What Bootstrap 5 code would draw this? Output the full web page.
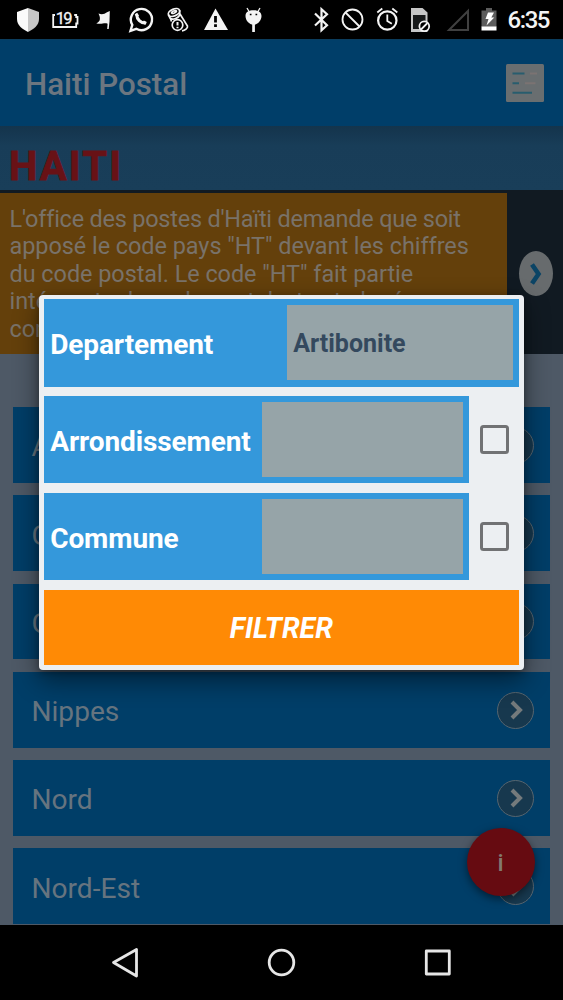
<!DOCTYPE html>
<html lang="fr">
<head>
<meta charset="utf-8">
<meta name="viewport" content="width=device-width, initial-scale=1">
<title>Haiti Postal</title>
<link href="https://cdn.jsdelivr.net/npm/bootstrap@5.3.0/dist/css/bootstrap.min.css" rel="stylesheet">
<style>
body{font-family:Roboto,"Liberation Sans",sans-serif;background:#4e5966;height:1000px;overflow:hidden}
.phone{width:563px;height:1000px}
.statusbar{height:39px;background:#000}
.statusbar svg,.navkeys svg{display:block}
.appbar{height:87px;background:#003e69;padding:0 19px 0 25px;border-top:1px solid #0b3d5e}
.app-title{font-size:31.3px;font-weight:500;color:#6c7680;line-height:1;padding-top:4px}
.country{height:64px;background:linear-gradient(#14344c,#183d58 20px,#193e59);padding:20.5px 0 0 9px}
.country-name{font-size:40px;font-weight:700;line-height:40px;color:#681216;letter-spacing:2.2px;-webkit-text-stroke:.9px #681216}
.notice{height:164px;background:#111a22;padding-top:3px}
.notice-text{width:507px;background:#64400b;color:#797269;font-size:23.45px;line-height:27.4px;padding:13px 10px 0 9.500px;white-space:nowrap;letter-spacing:-.04px}
.tight{letter-spacing:-.21px}
.oval{width:34px;height:45px;border-radius:50%;background:#676b6d;margin:58px 0 0 11.500px}
.list{padding:53px 12.8px 0 12.5px;gap:12.6px;height:571px;overflow:hidden}
.dept{height:75.7px;background:#003e68;color:#66747f;font-size:28.1px;padding:0 16px 0 19px;flex:none}
.dept span{padding-top:5px}
.round{width:37px;height:37px;border-radius:50%;border:1.5px solid #56656f;background:#17384e;margin-top:1px}
.navkeys{height:75px;background:#000;position:relative;border-top:1px solid #000}
.fab{left:466.5px;top:828px;width:68px;height:68px;background:#660b11;color:#83796f;font-size:24px;font-weight:500;box-shadow:0 3px 8px rgba(0,0,0,.5);padding-top:2px}
.dialog{left:39px;top:294.6px;width:484.6px;height:375.2px;padding:4.6px;background:#eceff2;border-radius:4px;box-shadow:0 10px 26px rgba(0,0,0,.48),0 2px 7px rgba(0,0,0,.3);gap:9.4px}
.line{height:87.4px;flex:none}
.blue{background:#3498db;color:#fff;font-weight:700;font-size:28px;padding:6.3px 6.3px 6.3px 6.6px}
.blue span{padding-top:4.6px;letter-spacing:-.11px}
.field{height:75px;background:#96a4a8;color:#34495e;font-size:25px;padding:2.5px 0 0 6.5px}
.f-wide{width:226px}.f-slim{width:201px}
.tick{width:28.5px;height:28.5px;border:3px solid #717274;border-radius:3.5px;margin:0 10.5px 0 11px}
.go{height:75px;background:#ff8a05;color:#fff;font-size:28.5px;font-weight:700;font-style:italic;border:0;border-radius:0;padding:5px 0 0}
</style>
</head>
<body>
<div class="phone position-relative d-flex flex-column overflow-hidden">
  <header class="statusbar">
    <svg width="563" height="39" fill="none" stroke="#f4f4f4" stroke-width="1.8">
      <g stroke="none"><path fill="#fafafa" d="M28 8 17 12v7c0 6 5 10 11 13z"/><path fill="#c7c7c7" d="M28 8l11 4v7c0 6-5 10-11 13z"/></g>
      <path d="M55 15h-1.800V27h23v-3.500h1.300V17h-1.300V15h-2"/>
      <text x="55.800" y="23.600" font-size="16.500" textLength="16.800" fill="#f4f4f4" stroke="#f4f4f4" stroke-width=".3" font-family="Roboto">19</text>
      <path fill="#f4f4f4" stroke="none" d="M98.500 13.500c3.500 1.300 6 .5 8.500-1.300l2.800-1.200-.3 10.500-.8 7.500h-1.500l.4-5.300c-3.500-1.300-5.500 1-11.300-.2 2.200-1.200 3.400-2.300 3.600-4.500.1-2-.4-3.500-1.400-5.500z"/>
      <path stroke-width="2.400" d="M130.500 30.800l1.800-5.900a10.600 10.600 0 1 1 4 3.900z"/>
      <path stroke-width="3" stroke-linecap="round" d="M136.800 15c0 4.500 4 8 8 8"/><path stroke-width="3.400" d="M135.600 15.800l2.500-1.500M143.800 24l1.500-2.800"/>
      <g stroke-width="1.700"><ellipse cx="174" cy="12.500" rx="6" ry="3.400" transform="rotate(-22 174 12.500)"/><ellipse cx="174" cy="12" rx="2.600" ry="1" transform="rotate(-22 174 12)"/><path d="M168.300 14.500l2 4c3 1.500 8-.5 9.500-3.500l-.2-5M180 14l7.500 12c.5 2-2.500 4.500-5.500 4.900M170.300 18l1.200 3.500"/><circle cx="177.500" cy="25" r="5.300"/><path stroke-width="2" d="M177.500 22v3.500m0 1.200v1.600"/></g>
      <path fill="#f4f4f4" stroke="none" d="M215.500 8.500L228 30h-24z"/><path stroke="#000" stroke-width="2.800" d="M215.500 16v6.500m0 1.700V27"/>
      <g fill="#f4f4f4" stroke="none"><path d="M245.500 16c0-4.200 3.500-5.800 8-5.800s8 1.600 8 5.800-3.700 8.800-8 8.800-8-4.600-8-8.800z"/><path d="M252.200 24h2.700v8h-2.700z"/><path stroke="#f4f4f4" stroke-width="1.300" d="M247 8l2.300 4m10.700-4l-2.300 4"/></g><path stroke="#000" stroke-width="1.600" d="M249.800 14.500h1.700m4 0h1.700"/>
      <path stroke-width="2.200" d="M315 13.500l12 11.700-5.500 5V9.300l5.500 5-12 11.200"/>
      <circle cx="352.500" cy="19.500" r="10"/><path d="M345.500 12.500l14 14"/>
      <circle cx="387.300" cy="20.500" r="9.200" stroke-width="2.200"/><path d="M387.300 14.500V21l4.500 2.800M377.300 12.500l5-4M397.300 12.500l-5-4"/>
      <path fill="#c6c6c6" stroke="none" d="M411 8h11.500l5 4.500V32H411z"/><path fill="#17191a" stroke="none" d="M413 15h12.500v14H413z"/><circle cx="424.300" cy="26.300" r="4.900" fill="#000"/><path d="M421 29.500l6.500-6.500"/>
      <path stroke="#404040" stroke-width="2" d="M468 11v19h-19z"/>
      <path fill="#5c5c5c" stroke="none" d="M486 8h6v2.500h4.500V27h-15V10.500h4.500z"/><path fill="#fff" stroke="none" d="M481.500 26.500h15V30.500h-15zM488 12.500h6l-2.700 5h3l-7.800 8 2-6.500h-3z"/>
      <text x="507.500" y="27.800" font-size="24" font-weight="500" textLength="43" fill="#f4f4f4" stroke="none" font-family="Roboto">6:35</text>
    </svg>
  </header>
  <div class="appbar d-flex align-items-center justify-content-between flex-shrink-0">
    <div class="app-title">Haiti Postal</div>
    <svg width="38" height="38" stroke-width="2"><rect width="38" height="38" rx="1.500" fill="#696e70"/><path stroke="#285d6e" d="M6.500 9.500h12m-12 9.700h6.500m-6.500 9.500h19.500"/><path stroke="#7b7372" d="M24 9.500h7m-12 9.700h10.500"/></svg>
  </div>
  <div class="country flex-shrink-0"><div class="country-name">HAITI</div></div>
  <section class="notice d-flex flex-shrink-0">
    <div class="notice-text"><span class="tight">L'office des postes d'Haïti demande que soit</span><br>apposé le code pays "HT" devant les chiffres<br>du code postal. Le code "HT" fait partie<br>intégrante du code postal, et est placé<br>comme suit</div>
    <div class="oval d-flex align-items-center justify-content-center"><svg width="14" height="24" fill="none" stroke="#0b4465" stroke-width="4.600"><path d="M3 2.500l6.500 9.500L3 21.500"/></svg></div>
  </section>
  <main class="list d-flex flex-column flex-shrink-0">
    <div class="dept d-flex align-items-center justify-content-between"><span>Artibonite</span><div class="round"></div></div>
    <div class="dept d-flex align-items-center justify-content-between"><span>Centre</span><div class="round"></div></div>
    <div class="dept d-flex align-items-center justify-content-between"><span>Grand'Anse</span><div class="round"></div></div>
    <div class="dept d-flex align-items-center justify-content-between"><span>Nippes</span><div class="round d-flex align-items-center justify-content-center"><svg width="16" height="20" fill="none" stroke="#747a7c" stroke-width="4"><path d="M4 2l8 8-8 8"/></svg></div></div>
    <div class="dept d-flex align-items-center justify-content-between"><span>Nord</span><div class="round d-flex align-items-center justify-content-center"><svg width="16" height="20" fill="none" stroke="#747a7c" stroke-width="4"><path d="M4 2l8 8-8 8"/></svg></div></div>
    <div class="dept d-flex align-items-center justify-content-between"><span>Nord-Est</span><div class="round d-flex align-items-center justify-content-center"><svg width="16" height="20" fill="none" stroke="#747a7c" stroke-width="4"><path d="M4 2l8 8-8 8"/></svg></div></div>
  </main>
  <div class="fab position-absolute rounded-circle d-flex align-items-center justify-content-center">i</div>
  <nav class="navkeys flex-shrink-0">
    <svg width="563" height="74" fill="none" stroke="#e6e6e6" stroke-width="2.800" stroke-linejoin="round"><path d="M136.500 23.500v26.500l-23-13.500z"/><circle cx="281.500" cy="36.500" r="12.300"/><rect x="426.300" y="25" width="23" height="23"/></svg>
  </nav>
  <form class="dialog position-absolute d-flex flex-column">
    <div class="line blue d-flex align-items-center justify-content-between"><span>Departement</span><div class="field f-wide d-flex align-items-center">Artibonite</div></div>
    <div class="line d-flex align-items-center">
      <div class="line blue flex-grow-1 d-flex align-items-center justify-content-between"><span>Arrondissement</span><div class="field f-slim"></div></div><div class="tick"></div>
    </div>
    <div class="line d-flex align-items-center">
      <div class="line blue flex-grow-1 d-flex align-items-center justify-content-between"><span>Commune</span><div class="field f-slim"></div></div><div class="tick"></div>
    </div>
    <button class="btn go w-100" type="button">FILTRER</button>
  </form>
</div>
<script src="https://cdn.jsdelivr.net/npm/bootstrap@5.3.0/dist/js/bootstrap.bundle.min.js"></script>
</body>
</html>
